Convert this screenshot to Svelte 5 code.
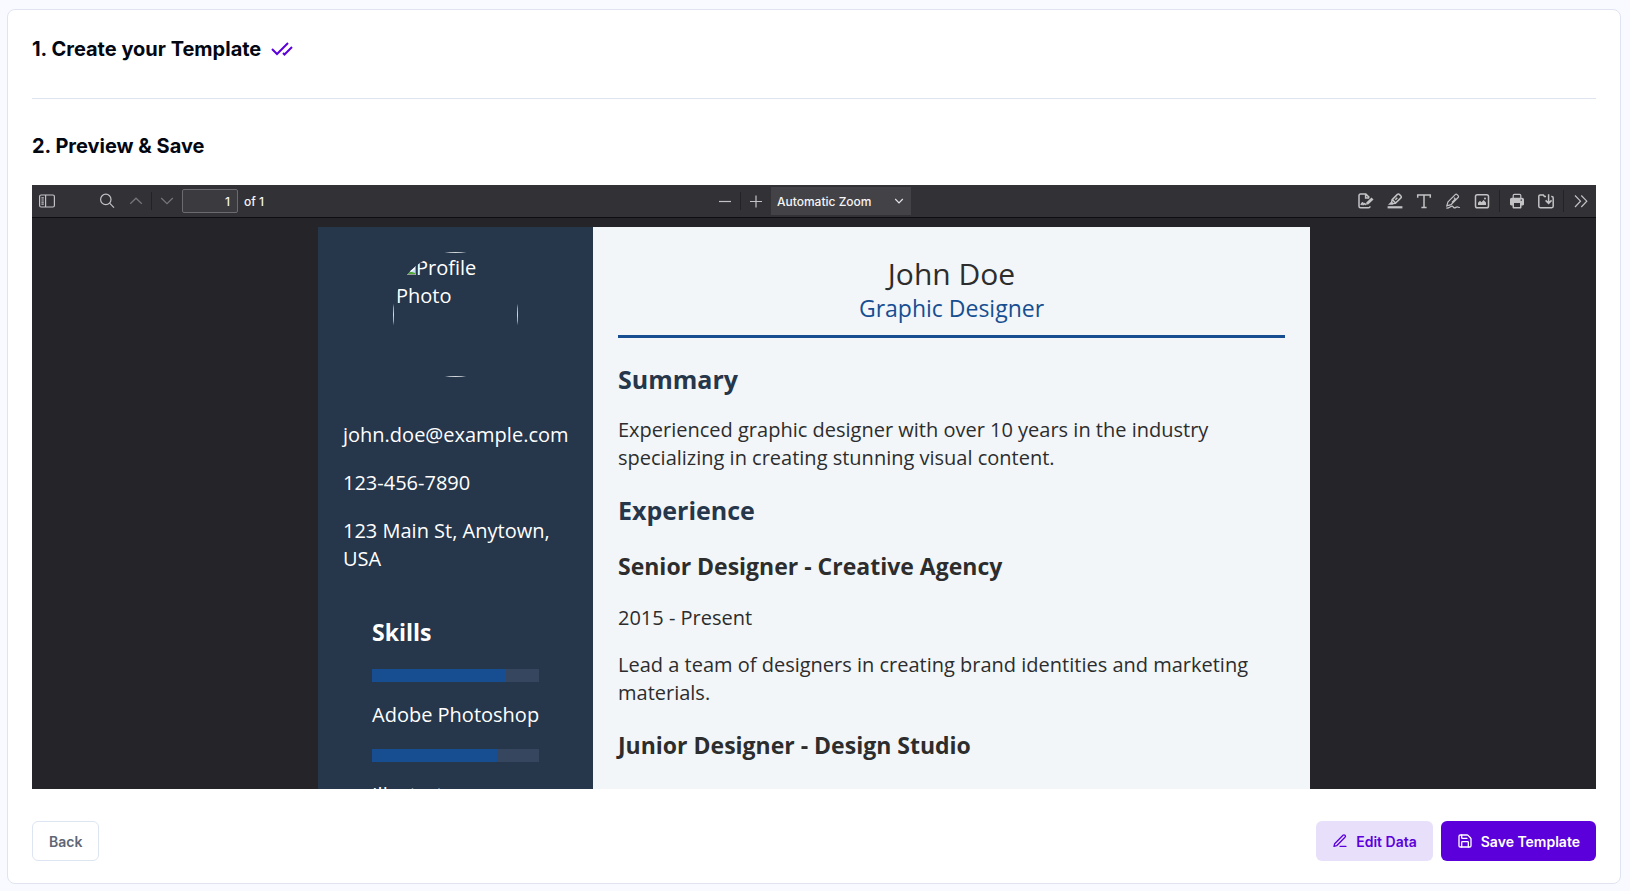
<script lang="ts">
	let page = $state('1');
	let zoom = $state('auto');

	const skills = [
		{ name: 'Adobe Photoshop', level: 80 },
		{ name: 'Illustrator', level: 75 }
	];

	const jobs = [
		{
			title: 'Senior Designer - Creative Agency',
			lines: [
				'2015 - Present',
				'Lead a team of designers in creating brand identities and marketing materials.'
			]
		},
		{
			title: 'Junior Designer - Design Studio',
			lines: []
		}
	];
</script>

<svelte:head>
	<title>Preview & Save</title>
</svelte:head>

<main class="page">
	<div class="card">
		<section class="step">
			<h2>1. Create your Template</h2>
			<svg class="done" viewBox="0 0 24 24" aria-hidden="true">
				<path d="M18 6 7 17l-5-5" />
				<path d="m22 10-7.5 7.5L13 16" />
			</svg>
		</section>

		<h2 class="preview-title">2. Preview &amp; Save</h2>

		<div class="viewer">
			<div class="toolbar">
				<div class="group">
					<button class="tool" aria-label="Toggle sidebar">
						<svg viewBox="0 0 16 16">
							<rect x="0.6" y="2" width="14.8" height="12" rx="1.5" />
							<path d="M6.6 2v12M2.4 4.8h2.4M2.4 7h2.4M2.4 9.2h2.4M2.4 11.2h2.4" />
						</svg>
					</button>
					<button class="tool find" aria-label="Find">
						<svg viewBox="0 0 16 16">
							<circle cx="6.8" cy="6.4" r="5.2" />
							<path d="m10.6 10.2 4.4 4.4" />
						</svg>
					</button>
					<button class="tool" aria-label="Previous page" disabled>
						<svg viewBox="0 0 16 16"><path d="m2.2 10.8 5.8-5.6 5.8 5.6" /></svg>
					</button>
					<span class="separator"></span>
					<button class="tool" aria-label="Next page" disabled>
						<svg viewBox="0 0 16 16"><path d="m2.2 5 5.8 5.6L13.8 5" /></svg>
					</button>
					<input id="page-number" class="page-number" aria-label="Page" bind:value={page} />
					<label class="page-count" for="page-number">of 1</label>
				</div>

				<div class="group middle">
					<button class="tool" aria-label="Zoom out">
						<svg viewBox="0 0 16 16"><path d="M2 8.5h12" /></svg>
					</button>
					<span class="separator"></span>
					<button class="tool" aria-label="Zoom in">
						<svg viewBox="0 0 16 16"><path d="M2 8.5h12M8 2.5v12" /></svg>
					</button>
					<div class="zoom">
						<select aria-label="Zoom" bind:value={zoom}>
							<option value="auto">Automatic Zoom</option>
							<option value="actual">Actual Size</option>
							<option value="width">Page Width</option>
						</select>
						<svg viewBox="0 0 10 10"><path d="m1.2 3 3.8 3.8L8.8 3" /></svg>
					</div>
				</div>

				<div class="group end">
					<button class="tool" aria-label="Add signature">
						<svg class="bold" viewBox="0 0 16 16">
							<path d="M12 13.2c0 1-.6 1.6-1.5 1.6h-8c-.9 0-1.500-.6-1.500-1.500V2.500C1 1.600 1.600 1 2.500 1h5.300l3.600 3.600M7.600 1v4h3.600" />
							<path d="M3 12c.8-2 1.600-2.600 1.900-2 .3.700-.4 1.800.4 1.600.7-.2 1-1.200 1.500-1 .4.200.1 1 1.200.9" />
							<path class="solid" d="m8.500 9.200 5-4.700 2 2-5 4.700-2.500.6z" />
						</svg>
					</button>
					<button class="tool" aria-label="Highlight">
						<svg class="bold" viewBox="0 0 16 16">
							<path d="m5.200 6.600 5.200-5.200c.6-.6 1.300-.6 1.900 0l1.600 1.600c.6.600.6 1.300 0 1.900L8.700 10zM5.200 6.600 4.600 9.200l1.500 1.500L8.700 10M4.600 9.200 2.800 11h2.700l.6-.3M8.300 6.800l2-2" />
							<path class="solid" d="M.6 13.200h14.800v2.200H.6z" />
						</svg>
					</button>
					<button class="tool" aria-label="Text">
						<svg class="bold" viewBox="0 0 16 16"><path d="M1.700 4.800V2h12.600v2.800M8 2v12.600M5.400 14.600h5.200" /></svg>
					</button>
					<button class="tool" aria-label="Draw">
						<svg viewBox="0 0 16 16">
							<path d="m3 8.800 7.200-7.200c.6-.6 1.300-.6 1.900 0l1 1c.6.600.6 1.300 0 1.900L6 11.600l-4.200 1.200zM9 4.600l1.400 1.400-3.500 3.500" />
							<path d="M1.300 15c3 .4 4-1.900 5.800-1.900 1.300 0 .8 1.700 2.300 1.700 1.300 0 1.700-.9 3-.9.9 0 1.200.7 2.500.6" />
						</svg>
					</button>
					<button class="tool" aria-label="Add image">
						<svg class="bold" viewBox="0 0 16 16">
							<rect x="1.500" y="1.800" width="13" height="13" rx="1.800" />
							<path class="solid" d="M4 12V9.700l2-2 1.500 1.500L9.600 7 12 9.400V12z" />
							<circle class="solid" cx="11" cy="5.600" r="1" />
						</svg>
					</button>
					<span class="separator wide"></span>
					<button class="tool" aria-label="Print">
						<svg viewBox="0 0 16 16">
							<path d="M4.200 5V2.500c0-.8.400-1.200 1.200-1.200h5.200c.8 0 1.200.4 1.200 1.200V5" />
							<path
								class="solid"
								fill-rule="evenodd"
								d="M3 4.800h10c1.300 0 2 .7 2 2V11c0 1-.5 1.400-1.500 1.400h-1V14c0 1-.5 1.500-1.500 1.500H5c-1 0-1.500-.5-1.500-1.500v-1.600h-1C1.500 12.400 1 12 1 11V6.800c0-1.300.7-2 2-2zM5 10v4h6v-4zM11.600 6.400v1.400H13V6.400z"
							/>
						</svg>
					</button>
					<button class="tool" aria-label="Save">
						<svg class="bold" viewBox="0 0 16 16">
							<path d="M8 3.500H6.500L5.300 2H2.200C1.300 2 .8 2.500.8 3.300v10c0 .9.500 1.400 1.400 1.400h11.600c.9 0 1.400-.5 1.400-1.400V4.900c0-.9-.5-1.400-1.400-1.400h-.6M10.600 1.300V10M7.600 7.400l3 3 3-3" />
						</svg>
					</button>
					<span class="separator wide"></span>
					<button class="tool" aria-label="Tools">
						<svg viewBox="0 0 16 16"><path d="m2 2.500 5.500 5.700L2 14M8.300 2.500l5.500 5.700L8.300 14" /></svg>
					</button>
				</div>
			</div>

			<div class="canvas">
				<article class="resume">
					<aside>
						<div class="photo">
							<svg viewBox="0 0 20 20" aria-hidden="true">
								<path fill="#c5d9f5" d="M0 0h20v20H0z" />
								<path fill="#4fa833" d="M1 19c4-3 12-4 15-2l3 1v1z" />
								<path fill="#fff" d="m12 16 7-5v3l-4 3z" />
								<path fill="none" stroke="#9a9a9a" d="M.5.5h19v19H.5z" />
							</svg>Profile Photo
						</div>
						<p>john.doe@example.com</p>
						<p>123-456-7890</p>
						<p>123 Main St, Anytown, USA</p>
						<section class="skills">
							<h3>Skills</h3>
							{#each skills as skill (skill.name)}
								<div class="bar"><div class="fill" style="width: {skill.level}%"></div></div>
								<p>{skill.name}</p>
							{/each}
						</section>
					</aside>
					<div class="content">
						<header>
							<h1>John Doe</h1>
							<div class="role">Graphic Designer</div>
						</header>
						<h2>Summary</h2>
						<p>
							Experienced graphic designer with over 10 years in the industry specializing in creating
							stunning visual content.
						</p>
						<h2>Experience</h2>
						{#each jobs as job (job.title)}
							<h3>{job.title}</h3>
							{#each job.lines as line}
								<p>{line}</p>
							{/each}
						{/each}
					</div>
				</article>
			</div>
		</div>

		<footer>
			<button class="btn outline">Back</button>
			<div class="actions">
				<button class="btn soft">
					<svg viewBox="0 0 24 24" aria-hidden="true">
						<path d="M12 20h9" />
						<path d="M16.500 3.500a2.120 2.120 0 0 1 3 3L7 19l-4 1 1-4Z" />
					</svg>
					Edit Data
				</button>
				<button class="btn primary">
					<svg viewBox="0 0 24 24" aria-hidden="true">
						<path d="M15.200 3a2 2 0 0 1 1.400.6l3.800 3.800a2 2 0 0 1 .6 1.400V19a2 2 0 0 1-2 2H5a2 2 0 0 1-2-2V5a2 2 0 0 1 2-2z" />
						<path d="M17 21v-7a1 1 0 0 0-1-1H8a1 1 0 0 0-1 1v7" />
						<path d="M7 3v4a1 1 0 0 0 1 1h7" />
					</svg>
					Save Template
				</button>
			</div>
		</footer>
	</div>
</main>

<style>
	:global(body) {
		background: #f9faff;
	}

	.page {
		box-sizing: border-box;
		display: flex;
		height: 100vh;
		min-height: 600px;
		padding: 9px 9px 7px 7px;
		color: #030712;
		font-family: Inter, sans-serif;
	}

	.card {
		flex: 1;
		min-width: 0;
		display: flex;
		flex-direction: column;
		padding: 24px 24px 22px;
		border: 1px solid #dfe4f0;
		border-radius: 8px;
		background: #fff;
	}

	h1,
	h2,
	h3,
	p {
		margin: 0;
	}

	.card > h2,
	.step h2 {
		font-size: 20px;
		line-height: 30px;
		font-weight: 700;
	}

	.step {
		display: flex;
		align-items: center;
		gap: 9px;
		padding-bottom: 34px;
		border-bottom: 1px solid #dde4ef;
	}

	.done {
		width: 24px;
		height: 24px;
		fill: none;
		stroke: #5b00db;
		stroke-width: 2;
	}

	.preview-title {
		padding: 32px 0 24px;
	}

	.viewer {
		flex: 1;
		min-height: 0;
		display: flex;
		flex-direction: column;
		overflow: hidden;
		background: #252429;
	}

	.toolbar {
		display: grid;
		grid-template-columns: 1fr auto 1fr;
		align-items: center;
		height: 32px;
		padding: 0 1px;
		border-bottom: 1px solid #0e0e10;
		background: #323136;
		color: #f5f5f7;
		font-size: 12px;
		font-weight: 500;
	}

	.group {
		display: flex;
		align-items: center;
		gap: 1px;
	}

	.middle {
		margin-right: 6px;
	}

	.end {
		justify-content: flex-end;
	}

	.tool {
		display: grid;
		place-items: center;
		width: 28px;
		height: 28px;
		padding: 0;
		border: 0;
		background: none;
		color: #c3c3c5;
	}

	.tool:disabled {
		color: #77767a;
	}

	.tool svg {
		width: 16px;
		height: 16px;
		fill: none;
		stroke: currentColor;
		stroke-width: 1.2;
	}

	.tool .bold {
		stroke-width: 1.5;
	}

	.tool .solid {
		fill: currentColor;
		stroke: none;
	}

	.find {
		margin-left: 31px;
	}

	.separator {
		width: 1px;
		height: 18px;
		background: #232227;
	}

	.separator.wide {
		height: 22px;
		margin: 0 2px;
	}

	.page-number {
		box-sizing: border-box;
		width: 56px;
		height: 24px;
		padding: 0 7px;
		border: 1px solid #6b6a6e;
		border-radius: 2px;
		background: #3b3a3e;
		color: inherit;
		font: inherit;
		text-align: right;
	}

	.page-count {
		margin-left: 5px;
	}

	.zoom {
		display: grid;
		align-items: center;
		width: 140px;
	}

	.zoom select,
	.zoom svg {
		grid-area: 1 / 1;
	}

	.zoom select {
		height: 28px;
		padding: 0 6px;
		border: 0;
		appearance: none;
		background: #434247;
		color: inherit;
		font: inherit;
	}

	.zoom svg {
		justify-self: end;
		width: 10px;
		height: 10px;
		margin-right: 7px;
		fill: none;
		stroke: #e4e4e6;
		stroke-width: 1.2;
		pointer-events: none;
	}

	.canvas {
		flex: 1;
		min-height: 0;
		padding-top: 9px;
		overflow: hidden;
	}

	.resume {
		display: grid;
		grid-template-columns: 275px 1fr;
		max-width: 992px;
		min-height: 100%;
		margin: 0 auto;
		background: #f2f6f9;
		color: #2d2d2d;
		font-family: 'Open Sans', sans-serif;
		font-size: 20px;
		line-height: 28px;
	}

	.resume p {
		margin: 19px 0;
	}

	aside {
		padding: 25px;
		background: #26364b;
		color: #fff;
	}

	.resume aside > p {
		margin: 20px 0;
	}

	.photo {
		box-sizing: border-box;
		width: 125px;
		height: 125px;
		margin: 0 auto 44px;
		padding: 1px 2px;
		border: 1px solid #d5d8dc;
		clip-path: circle(50%);
	}

	.photo svg {
		width: 20px;
		height: 20px;
	}

	.skills {
		padding: 22px 29px;
	}

	.resume .skills p {
		margin: 0 0 20px;
		white-space: nowrap;
	}

	.resume h3 {
		margin: 21px 0;
		font-size: 23px;
		line-height: 34px;
	}

	.resume .skills h3 {
		margin: 0 0 20px;
	}

	.bar {
		height: 13px;
		margin-bottom: 19px;
		background: #37465f;
	}

	.fill {
		height: 100%;
		background: #174e91;
	}

	.content {
		padding: 25px;
	}

	header {
		padding-bottom: 15px;
		border-bottom: 3px solid #174e91;
		text-align: center;
	}

	h1 {
		font-size: 30px;
		line-height: 44px;
		font-weight: 400;
	}

	.role {
		color: #174e91;
		font-size: 23px;
		line-height: 24px;
	}

	.resume h2 {
		margin: 20px 0 18px;
		color: #26364b;
		font-size: 25px;
		line-height: 36px;
	}

	.resume header + h2 {
		margin-top: 23px;
	}

	footer {
		display: flex;
		justify-content: space-between;
		padding-top: 32px;
	}

	.actions {
		display: flex;
		gap: 8px;
	}

	.btn {
		display: flex;
		align-items: center;
		gap: 8px;
		height: 40px;
		padding: 0 16px;
		border: 0;
		border-radius: 6px;
		font-family: inherit;
		font-size: 14px;
		font-weight: 600;
	}

	.btn svg {
		width: 16px;
		height: 16px;
		fill: none;
		stroke: currentColor;
		stroke-width: 2;
		stroke-linecap: round;
		stroke-linejoin: round;
	}

	.outline {
		border: 1px solid #dde4f2;
		background: #fff;
		color: #5f6675;
	}

	.soft {
		background: #e8dffb;
		color: #5b00db;
	}

	.primary {
		background: #5b00db;
		color: #fff;
	}
</style>
